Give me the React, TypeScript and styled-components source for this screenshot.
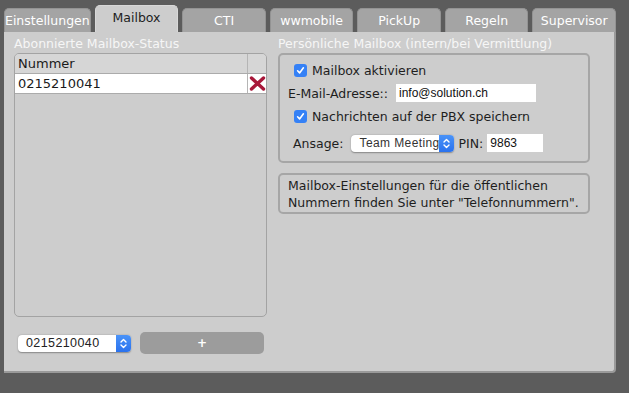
import React from "react";
import styled, { createGlobalStyle } from "styled-components";

const GlobalStyle = createGlobalStyle`
  html, body {
    margin: 0;
    padding: 0;
    background: #5c5c5c;
    font-family: "DejaVu Sans", "Noto Sans", sans-serif;
  }
`;

const Page = styled.div`
  width: 629px;
  height: 393px;
  padding: 5px 0 0 4px;
  box-sizing: border-box;
`;

const TabBar = styled.div`
  display: flex;
  align-items: flex-end;
  gap: 4px;
  width: 612px;
  height: 27px;
`;

const Tab = styled.div<{ $active?: boolean }>`
  flex: 1;
  display: flex;
  align-items: center;
  justify-content: center;
  height: ${(p) => (p.$active ? 27 : 24)}px;
  padding-bottom: ${(p) => (p.$active ? 3 : 0)}px;
  box-sizing: border-box;
  border-radius: 5px 5px 0 0;
  background: ${(p) => (p.$active ? "#cdcdcd" : "#a4a4a4")};
  border: 1px solid ${(p) => (p.$active ? "#d8d8d8" : "#939393")};
  border-bottom: none;
  color: ${(p) => (p.$active ? "#1e1e1e" : "#ffffff")};
  font-size: 12.5px;
  white-space: nowrap;
`;

const Panel = styled.div`
  display: grid;
  grid-template-columns: 253px 312px;
  column-gap: 11px;
  width: 612px;
  height: 341px;
  box-sizing: border-box;
  padding: 3px 0 0 10px;
  background: #cdcdcd;
  border-right: 2px solid #9a9a9a;
  border-bottom: 2px solid #9a9a9a;
  border-radius: 0 0 4px 0;
`;

const Column = styled.div`
  display: flex;
  flex-direction: column;
`;

const SectionTitle = styled.div`
  height: 18px;
  line-height: 18px;
  color: #f6f6f6;
  font-size: 12.5px;
  white-space: nowrap;
`;

const TableBox = styled.div`
  height: 264px;
  box-sizing: border-box;
  border: 1.5px solid #a3a3a3;
  border-radius: 5px;
  overflow: hidden;
`;

const TableRow = styled.div<{ $head?: boolean }>`
  display: grid;
  grid-template-columns: 1fr 19px;
  height: 19px;
  background: ${(p) => (p.$head ? "#d6d6d6" : "#ffffff")};
  border-bottom: 1px solid #ababab;
`;

const Cell = styled.div`
  display: flex;
  align-items: center;
  justify-content: flex-start;
  padding-left: 3px;
  font-size: 13px;
  color: #1a1a1a;
  & + & {
    border-left: 1px solid #b5b5b5;
    justify-content: center;
    padding-left: 0;
  }
`;

const AddRow = styled.div`
  display: flex;
  align-items: center;
  gap: 9px;
  margin-top: 15px;
  padding-left: 4px;
  height: 22px;
`;

const SelectBox = styled.div<{ $width: number }>`
  display: flex;
  width: ${(p) => p.$width}px;
  height: 17px;
  border-radius: 4px;
  background: #ffffff;
  box-shadow: 0 0.5px 1.5px rgba(0, 0, 0, 0.35);
  overflow: hidden;
`;

const SelectText = styled.div<{ $small?: boolean }>`
  flex: 1;
  display: flex;
  align-items: center;
  padding-left: 8px;
  font-family: "Liberation Sans", Arial, sans-serif;
  font-size: ${(p) => (p.$small ? 12 : 12.5)}px;
  color: ${(p) => (p.$small ? "#333" : "#222")};
  white-space: nowrap;
  overflow: hidden;
  letter-spacing: 0.4px;
`;

const Stepper = styled.div`
  display: flex;
  align-items: center;
  justify-content: center;
  flex: 0 0 15px;
  background: linear-gradient(#4a93f8, #2a72ee);
`;

const AddButton = styled.div`
  flex: 0 0 124px;
  height: 22px;
  border-radius: 5px;
  background: #9c9c9c;
  color: #ffffff;
  font-size: 12px;
  font-weight: bold;
  display: flex;
  align-items: center;
  justify-content: center;
`;

const Fieldset = styled.div`
  display: flex;
  flex-direction: column;
  gap: 5px;
  height: 110px;
  box-sizing: border-box;
  padding: 6px 0 0 8px;
  border: 2px solid #a6a6a6;
  border-radius: 5px;
`;

const FieldRow = styled.div<{ $indent?: number; $extraTop?: number }>`
  display: flex;
  align-items: center;
  height: 18px;
  padding-left: ${(p) => p.$indent ?? 0}px;
  margin-top: ${(p) => p.$extraTop ?? 0}px;
  font-size: 12.5px;
  color: #1e1e1e;
  white-space: nowrap;
`;

const CheckBox = styled.span`
  display: inline-flex;
  align-items: center;
  justify-content: center;
  width: 13px;
  height: 13px;
  margin-right: 5px;
  border-radius: 3px;
  background: #3581f6;
`;

const Label = styled.span<{ $gap?: number; $lead?: number }>`
  margin-right: ${(p) => p.$gap ?? 0}px;
  margin-left: ${(p) => p.$lead ?? 0}px;
`;

const TextInput = styled.div<{ $width: number }>`
  display: flex;
  align-items: center;
  width: ${(p) => p.$width}px;
  height: 18px;
  padding-left: 3px;
  box-sizing: border-box;
  background: #ffffff;
  font-family: "Liberation Sans", Arial, sans-serif;
  font-size: 12px;
  color: #111;
`;

const InfoBox = styled.div`
  margin-top: 10px;
  height: 41px;
  box-sizing: border-box;
  padding: 2px 0 0 8px;
  border: 2px solid #a6a6a6;
  border-radius: 5px;
  font-size: 12.5px;
  line-height: 17px;
  color: #1e1e1e;
  white-space: nowrap;
`;

const Check = () => (
  <svg width="9" height="9" viewBox="0 0 9 9">
    <path d="M1.6 4.8 L3.6 6.9 L7.4 1.8" fill="none" stroke="#fff" strokeWidth="1.6" strokeLinecap="round" strokeLinejoin="round" />
  </svg>
);

const UpDown = () => (
  <svg width="9" height="13" viewBox="0 0 9 13">
    <path d="M2 5 L4.5 2.5 L7 5 M2 8 L4.5 10.5 L7 8" fill="none" stroke="#fff" strokeWidth="1.4" strokeLinecap="round" strokeLinejoin="round" />
  </svg>
);

const RemoveIcon = () => (
  <svg width="17" height="15" viewBox="0 0 17 15">
    <path d="M2.5 2 L14.5 13 M14.5 2 L2.5 13" stroke="#a8183a" strokeWidth="3.4" strokeLinecap="round" />
  </svg>
);

const tabs = ["Einstellungen", "Mailbox", "CTI", "wwmobile", "PickUp", "Regeln", "Supervisor"];

export default function App() {
  return (
    <Page>
      <GlobalStyle />
      <TabBar>
        {tabs.map((t) => (
          <Tab key={t} $active={t === "Mailbox"}>
            {t}
          </Tab>
        ))}
      </TabBar>
      <Panel>
        <Column>
          <SectionTitle>Abonnierte Mailbox-Status</SectionTitle>
          <TableBox>
            <TableRow $head>
              <Cell>Nummer</Cell>
              <Cell />
            </TableRow>
            <TableRow>
              <Cell>0215210041</Cell>
              <Cell>
                <RemoveIcon />
              </Cell>
            </TableRow>
          </TableBox>
          <AddRow>
            <SelectBox $width={113}>
              <SelectText>0215210040</SelectText>
              <Stepper>
                <UpDown />
              </Stepper>
            </SelectBox>
            <AddButton>+</AddButton>
          </AddRow>
        </Column>
        <Column>
          <SectionTitle>Persönliche Mailbox (intern/bei Vermittlung)</SectionTitle>
          <Fieldset>
            <FieldRow $indent={6}>
              <CheckBox>
                <Check />
              </CheckBox>
              Mailbox aktivieren
            </FieldRow>
            <FieldRow>
              <Label $gap={8}>E-Mail-Adresse::</Label>
              <TextInput $width={140}>info@solution.ch</TextInput>
            </FieldRow>
            <FieldRow $indent={6}>
              <CheckBox>
                <Check />
              </CheckBox>
              Nachrichten auf der PBX speichern
            </FieldRow>
            <FieldRow $indent={5} $extraTop={4}>
              <Label $gap={8}>Ansage:</Label>
              <SelectBox $width={103}>
                <SelectText $small>Team Meeting</SelectText>
                <Stepper>
                  <UpDown />
                </Stepper>
              </SelectBox>
              <Label $gap={4} $lead={4}>PIN:</Label>
              <TextInput $width={56}>9863</TextInput>
            </FieldRow>
          </Fieldset>
          <InfoBox>
            Mailbox-Einstellungen für die öffentlichen
            <br />
            Nummern finden Sie unter "Telefonnummern".
          </InfoBox>
        </Column>
      </Panel>
    </Page>
  );
}
